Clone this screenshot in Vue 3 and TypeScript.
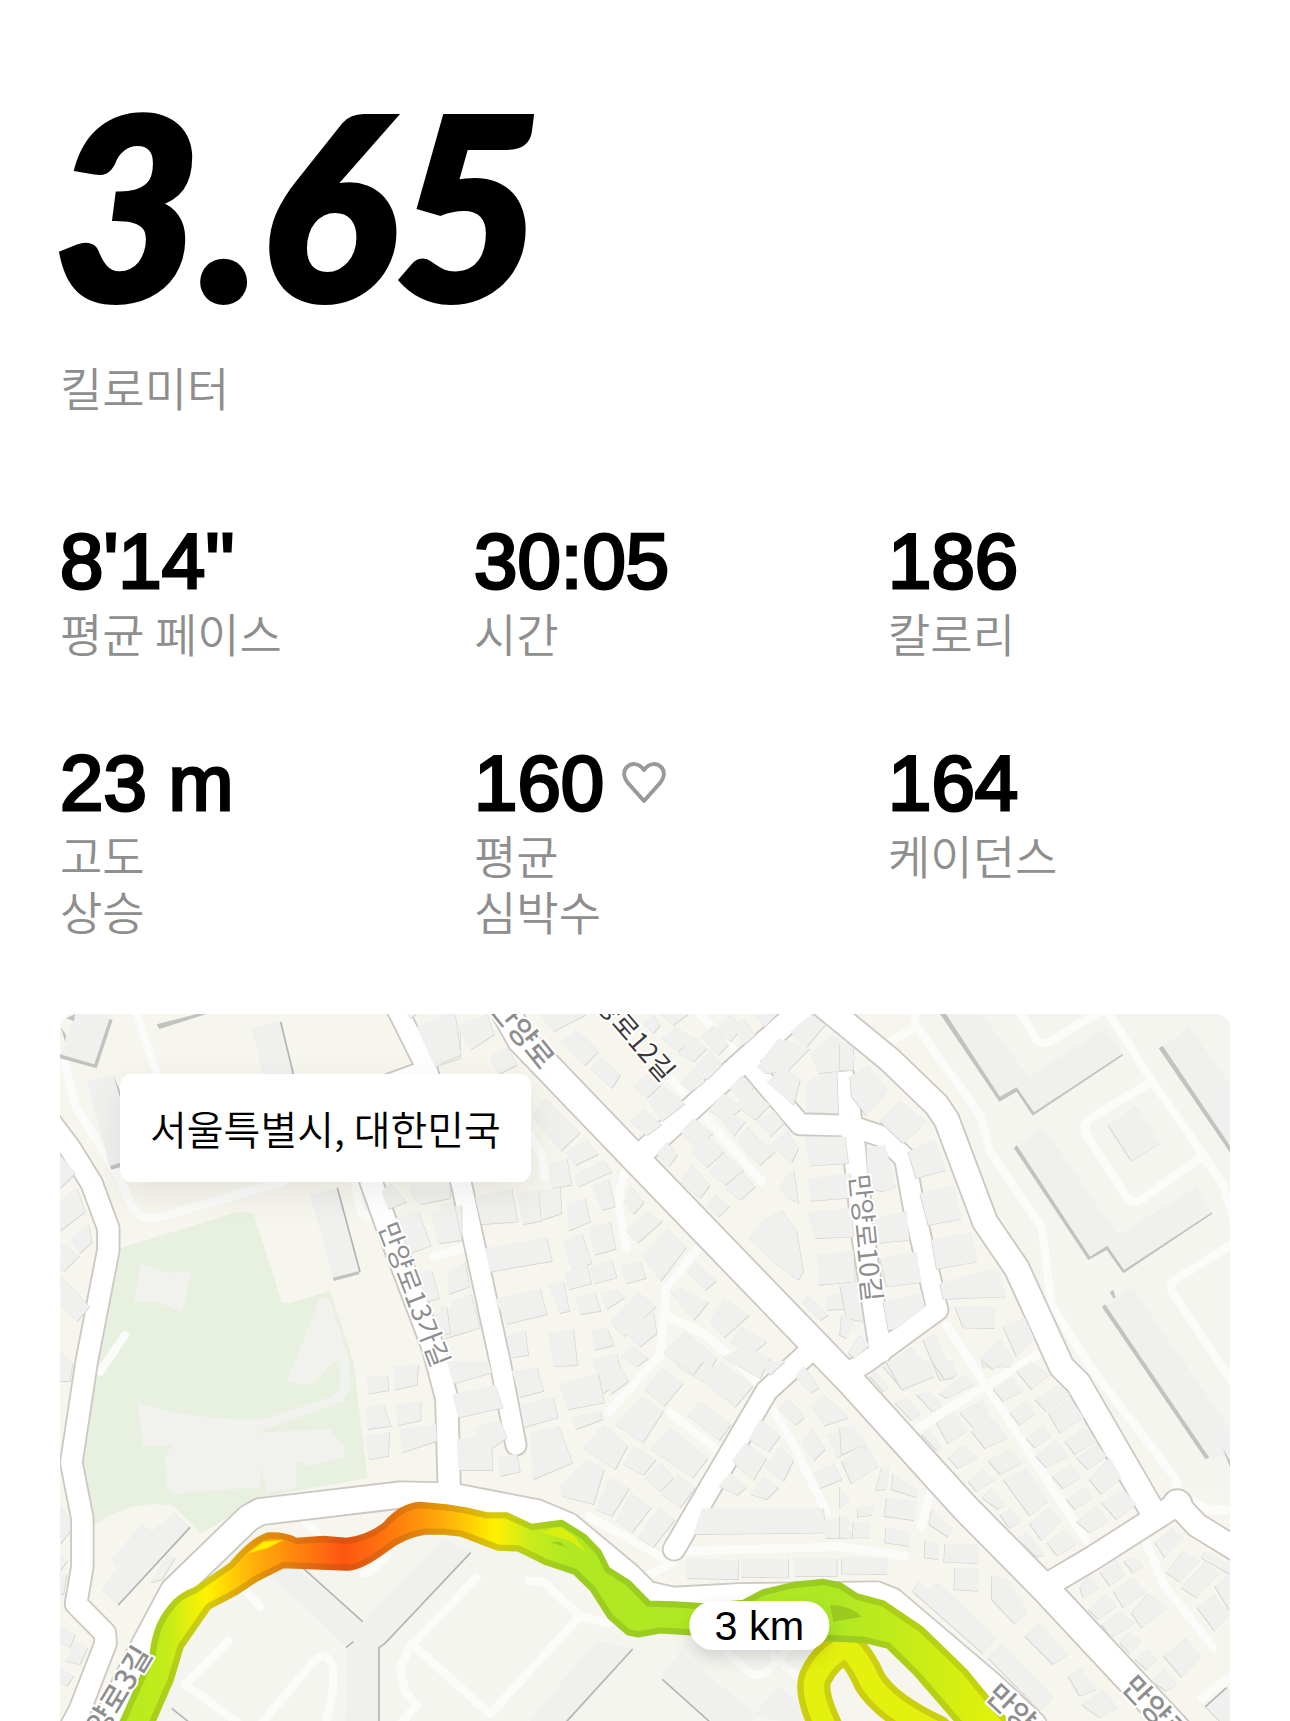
<script setup lang="ts">
interface Stat {
  value: string
  label: string[]
  heart?: boolean
}

interface Road {
  d: string
  w: number
}

interface Tile {
  x: number
  y: number
  dx: number
  shapes: string[]
}

const stats: Stat[] = [
  { value: "8'14''", label: ['평균 페이스'] },
  { value: '30:05', label: ['시간'] },
  { value: '186', label: ['칼로리'] },
  { value: '23 m', label: ['고도', '상승'] },
  { value: '160', label: ['평균', '심박수'], heart: true },
  { value: '164', label: ['케이던스'] },
]

const roads: Road[] = [
  { d: 'M1350,-10 L1415,105 L1770,475 L2410,1138 L2745,1508 L2990,1756 L3390,2185', w: 82 },
  { d: 'M0,350 L60,430 L125,535 L175,670 L175,735 L110,1070 L64,1373 L97,1540 L97,1686 L78,1796 L165,1885 L167,1915 L90,2113 L60,2170', w: 62 },
  { d: 'M1030,-10 L1130,190 L1235,540 L1350,1070 L1398,1320', w: 58 },
  { d: 'M1115,205 L960,262 L930,420 L965,535 L1010,660 L1150,1030 L1190,1180 L1198,1460', w: 64 },
  { d: 'M150,2190 L282,1923 L370,1758 L595,1540 L630,1520 L1050,1470 L1200,1473 L1460,1523 L1555,1563 L1735,1713 L1790,1768 L1870,1786 L2070,1775 L2480,1770 L2525,1788 L2825,2043 L2950,2160', w: 76 },
  { d: 'M1770,450 L2090,160 L2270,0', w: 66 },
  { d: 'M2270,-40 L2380,50 L2520,165 L2660,300 L2690,345 L2805,650 L2900,790 L3035,1085 L3085,1135 L3302,1510', w: 72 },
  { d: 'M3000,1735 L3130,1658 L3385,1495', w: 68 },
  { d: 'M3380,1495 L3440,1560 L3570,1640', w: 68 },
  { d: 'M2100,180 L2250,358 L2400,362 L2500,395 L2565,460 L2590,600 L2662,915 L2450,1070 L2400,1100', w: 60 },
  { d: 'M2375,200 L2395,300 L2410,400 L2440,700 L2492,1040', w: 64 },
  { d: 'M2300,1020 L2150,1158 L1872,1633', w: 62 },
]

const lanes: string[] = [
  'M1925,0 L2055,140', 'M1850,210 L1910,275', 'M1965,335 L2135,530',
  'M1725,495 L1708,560 L1708,620 L1730,730',
  'M1945,730 L1848,850 L1842,930 L1830,1050 L1675,1223',
  'M1845,930 L1960,985 L2060,1070 L2120,1130',
  'M1440,390 L1475,450 L1485,515', 'M1150,755 L1240,728',
  'M1860,1223 L2000,1333', 'M2170,1218 L2220,1298 L2330,1523',
  'M1615,1533 L1865,1673 L1790,1715', 'M1910,1638 L2370,1625 L2480,1640 L2565,1653',
  'M2640,1463 L2613,1565', 'M1435,1728 L1480,1730 L1590,1833 L1680,1855',
  'M1590,1833 L1320,2128 L1090,1920', 'M1280,1718 L1080,1925 L1050,1990 L1065,2060 L1100,2100 L1040,2170',
  'M765,1548 L840,1628', 'M940,1705 L960,1700 L1010,1650', 'M580,1748 L630,1805',
  'M535,1908 L405,2038 L560,2150', 'M640,2148 L790,1970 Q830,1930 850,1990 L850,2050 L830,2150',
  'M2030,1938 L2100,2005 Q2125,2020 2160,1990 L2230,1915', 'M2170,1950 L2240,2015',
  'M2690,960 L2805,1138 L3110,1608', 'M2605,1268 L2960,1050',
  'M3290,1613 L3340,1738 L3490,1928', 'M3455,2078 L3550,2010',
  'M2585,0 L2600,65 L2790,330 L2820,440 L2975,665 L3005,900 L3110,1070 L3375,1420 L3390,1470',
  'M2520,110 L2600,65', 'M3430,1490 L3480,1515 L3560,1515',
  'M2895,0 L2955,95 Q2970,125 3000,110 L3150,20', 'M3165,10 L3305,225 L3520,540 L3550,640',
  'M3305,230 L3120,340 Q3095,360 3110,390 L3225,570 Q3245,600 3275,583 L3450,460',
  'M3550,715 L3375,825 Q3355,840 3370,865 L3560,1150',
  'M250,0 L325,220', 'M40,150 L75,300 L210,520 L240,590 Q265,655 330,635 L700,530',
  'M910,500 L930,610 Q940,640 970,635', 'M225,990 L150,1100',
]

const tiles: Tile[] = [
  {
    x: 0, y: 0, dx: 1,
    shapes: [
      '605,70 690,50 730,215 640,215', '30,450 75,505 30,550', '80,548 105,620 30,678 30,585',
      '115,655 125,712 88,745 60,700', '35,715 88,752 42,798 30,790', '30,815 78,860 118,905 80,950 34,900',
      '1100,65 1185,32 1230,60 1230,160 1155,185', '1070,27 1100,27 1080,40',
      '1020,535 1070,590 1015,612 995,560', '1075,540 1200,540 1200,580 1115,597 1085,575',
      '1035,640 1105,618 1143,722 1080,745', '1140,625 1235,600 1235,705 1165,715',
      '1100,805 1145,795 1168,880 1130,890', '1200,800 1200,865 1235,850 1235,790', '30,1040 60,1070 60,1125 30,1130',
      '1150,930 1215,905 1235,985 1185,1000',
    ],
  },
  {
    x: 1170, y: 0, dx: 1,
    shapes: [
      '50,60 140,27 163,88 92,134', '0,27 45,27 62,150 0,176', '148,155 200,125 232,180 175,208',
      '300,27 440,27 340,80', '362,110 410,75 475,140 433,182', '450,190 480,155 540,210 515,250',
      '580,240 620,205 663,240 620,280', '625,285 670,245 735,295 665,350', '570,348 610,312 665,358 620,392',
      '275,330 315,280 420,383 362,438', '375,440 440,405 475,448 407,480', '400,510 490,465 515,500 415,545',
      '325,480 380,460 395,540 335,550', '455,540 505,522 525,605 485,615', '550,590 570,540 612,592 580,628',
      '105,575 215,550 232,650 125,658', '230,565 295,555 303,648 248,658', '300,555 360,548 365,625 305,645',
      '380,600 435,578 450,650 385,678', '558,678 615,620 667,648 595,712', '447,665 510,650 527,732 462,750',
      '368,710 425,685 455,775 395,792', '135,730 320,697 336,768 150,800', '605,750 680,672 738,728 662,828',
      '373,800 440,778 455,835 385,854', '450,785 515,765 530,818 462,836', '543,785 600,768 617,820 557,836',
      '0,600 40,590 65,705 0,715', '25,800 75,770 88,845 25,868', '165,882 300,850 320,928 200,957',
      '325,840 370,828 388,918 358,925', '405,880 465,862 482,918 420,928', '480,868 530,850 553,878 500,912',
      '510,952 595,862 648,905 550,995', '30,890 92,865 120,968 50,990', '0,905 20,905 30,985 0,990',
      '690,860 720,848 805,892 762,945', '740,800 765,768 828,828 795,856', '808,950 850,880 928,930 852,998',
      '870,1010 900,965 980,1010 935,1048', '550,980 640,920 650,985 600,1025', '670,1040 735,978 830,1060 790,1130 720,1090',
      '845,1055 920,1020 990,1060 960,1120', '200,990 255,975 265,1050 215,1058', '325,985 400,972 412,1080 340,1085',
      '455,975 500,965 522,1020 462,1035', '540,1055 575,1020 625,1060 590,1085', '455,1065 530,1045 550,1120 490,1165',
      '610,55 640,27 660,60 640,85', '660,27 745,27 700,60', '665,100 705,65 760,100 715,140',
      '715,145 760,95 800,130 760,170', '720,235 760,190 795,230 755,258', '765,180 810,140 845,180 800,225',
      '780,95 820,60 865,120 835,150', '825,75 870,27 905,70 870,110', '880,60 910,40 945,90 910,120', '940,27 1010,27 975,65',
      '1050,80 1115,27 1155,60 1100,125', '950,185 1015,100 1110,130 1040,200 975,205', '1110,145 1175,90 1240,130 1240,195 1135,205',
      '980,230 1030,185 1080,225 1060,300', '1098,240 1125,215 1190,200 1195,325 1098,322',
      '868,250 905,210 940,245 910,292', '805,315 850,265 905,310 855,350', '885,300 930,250 990,300 945,345',
      '850,355 880,330 915,350 880,395', '720,380 760,340 818,385 770,428', '890,400 920,365 960,410 925,450',
      '950,345 1000,315 1032,355 990,395', '650,445 680,410 712,450 685,485', '750,440 800,392 852,440 800,488',
      '805,500 850,445 910,495 855,540', '920,440 960,400 1005,440 960,480', '990,420 1040,375 1075,430 1055,472',
      '720,530 755,480 810,540 780,580', '855,550 905,500 945,545 900,585', '800,600 825,568 867,605 835,635',
      '1015,545 1060,490 1075,595 1045,580', '925,700 975,640 1025,615 1070,680 1090,800 1075,825 1010,780',
      '1093,395 1215,395 1225,475 1110,482', '1105,520 1230,505 1235,578 1110,588', '1100,620 1235,610 1240,695 1125,700',
      '1130,750 1240,735 1245,830 1135,840', '1155,872 1230,860 1245,910 1160,915', '1085,890 1100,870 1165,930 1140,945',
    ],
  },
  {
    x: 2370, y: 0, dx: -1,
    shapes: [
      '0,115 50,158 20,195 0,195', '30,215 85,180 145,255 80,332 35,275', '122,350 180,285 262,350 190,415',
      '80,430 135,418 170,545 130,560 85,550', '205,440 285,402 320,495 228,520', '240,565 345,540 365,642 265,660',
      '97,640 200,618 208,705 110,715', '275,705 395,680 412,770 290,792', '120,760 230,740 245,832 140,845',
      '300,835 470,790 500,875 310,882', '130,890 245,865 255,905 170,970 145,975', '345,905 465,905 465,970 370,968',
      '490,965 555,940 582,1000 530,1055', '425,1060 480,1000 520,1060 515,1085 430,1085', '0,840 50,830 70,950 20,940',
      '25,1045 60,990 90,1020 45,1060', '5,930 45,950 20,1000 0,990', '805,360 890,305 960,415 875,468',
      '250,1005 285,985 345,1120 300,1125', '130,1085 215,1025 285,1115 190,1155',
    ],
  },
  {
    x: 0, y: 1068, dx: 1,
    shapes: [
      '950,45 1012,42 1015,88 955,98', '1030,15 1105,10 1100,72 1032,86', '948,140 1000,130 1022,195 952,205',
      '1038,130 1112,120 1112,178 1042,194', '948,225 1018,212 1015,285 955,296', '1050,205 1158,190 1160,240 1055,275',
      '155,685 200,620 185,590 275,492 305,512 370,455 420,498 205,730', '300,665 350,580 375,590 335,655',
      '30,5 68,5 60,60 30,60', '30,795 75,820 60,860 30,845', '45,900 75,840 112,860 90,910',
      '30,920 70,945 50,975 30,965', '30,430 60,480 60,510 30,550', '30,580 52,600 30,630', '30,640 50,640 40,700 30,700',
    ],
  },
  {
    x: 1170, y: 1068, dx: 1,
    shapes: [
      '20,0 145,0 155,35 40,68', '215,30 290,18 310,90 240,108', '37,100 165,72 188,140 55,170',
      '240,128 340,108 353,170 252,198', '50,235 105,225 108,195 180,178 200,230 155,262 157,328 55,328',
      '172,288 230,278 240,332 180,345', '270,215 355,195 398,305 280,355', '357,70 475,38 492,125 385,145',
      '392,170 480,150 487,175 408,205', '485,30 530,0 565,60 512,100', '525,190 605,105 670,150 608,245',
      '612,85 665,20 728,68 672,135', '425,260 490,190 562,255 525,325', '548,310 580,255 648,295 610,342',
      '360,375 440,295 492,325 460,430 365,405', '632,265 690,198 803,292 758,350', '612,350 660,305 700,350 660,392',
      '663,400 710,340 765,380 720,440', '465,445 510,350 567,382 515,465', '528,478 570,395 633,440 575,515',
      '592,530 655,440 705,475 640,558', '740,160 780,122 873,190 838,238', '778,50 840,0 938,75 885,138',
      '705,0 790,0 760,40', '835,375 870,335 918,380 890,402', '875,300 915,245 980,290 940,358',
      '925,235 960,175 1020,225 985,272', '975,315 1020,258 1060,298 1030,360', '928,400 970,345 1015,380 980,415',
      '1015,145 1045,112 1092,170 1065,192', '1080,245 1115,205 1155,265 1122,298', '1113,130 1150,100 1225,170 1150,195',
      '1118,335 1180,308 1205,355 1140,382', '1160,220 1220,200 1250,260 1190,290', '1150,480 1200,470 1240,530 1155,532',
      '785,442 1150,442 1155,515 760,520', '740,590 895,598 893,655 740,652', '903,592 1045,592 1045,650 903,648',
      '1062,590 1190,592 1190,645 1062,645', '1065,45 1090,15 1138,80 1110,95', '955,0 1035,0 990,42',
    ],
  },
  {
    x: 2370, y: 1068, dx: -1,
    shapes: [
      '90,45 110,30 148,80 130,92', '138,0 270,0 285,45 185,85', '275,0 340,0 352,42 315,55',
      '165,125 200,110 243,155 215,178', '230,100 265,88 308,130 278,152', '298,98 375,40 405,70 320,112',
      '360,155 430,115 450,165 400,200', '290,185 345,150 382,210 325,248', '395,210 455,170 505,230 435,262',
      '245,220 265,205 305,255 290,268', '325,290 370,252 415,290 355,322', '445,298 510,262 550,305 480,340',
      '385,360 430,325 465,355 410,392', '427,410 455,382 495,430 475,445', '490,355 560,322 625,420 570,465',
      '480,460 515,440 545,480 510,502', '570,488 630,440 665,478 605,538', '535,535 560,510 615,582 590,588',
      '622,545 675,505 710,550 652,585', '460,85 520,48 550,90 490,120', '530,30 575,0 630,40 575,85',
      '585,115 655,72 690,100 620,152', '510,155 560,118 585,160 540,192', '625,155 690,112 732,170 660,215',
      '560,232 610,190 635,225 585,260', '588,285 650,235 685,285 620,320', '675,240 735,200 770,240 705,280',
      '710,290 770,250 800,285 745,325', '637,345 695,310 725,350 670,382', '748,355 810,290 845,350 785,400',
      '680,415 735,378 760,410 705,445', '785,425 850,385 890,430 830,475', '710,482 770,435 805,482 750,515',
      '0,200 40,190 80,250 5,280', '5,300 80,250 118,315 35,368', '0,375 30,420 0,440', '125,320 150,318 140,385 108,388',
      '160,335 235,390 232,410 155,385', '140,410 228,420 222,478 133,465', '55,440 102,432 98,462 52,468',
      '0,462 30,470 20,530 0,530', '40,480 88,482 92,530 38,530', '138,498 212,512 208,555 135,545',
      '275,445 340,505 325,528 268,490', '255,538 298,545 295,595 255,590', '315,548 418,550 415,608 312,602',
      '345,620 418,622 415,690 343,685', '5,588 142,590 142,640 5,638', '455,645 500,650 565,750 525,788 455,715',
      '218,690 235,662 270,685 295,665 470,828 430,878', '555,825 600,785 685,880 640,910',
      '445,890 490,848 642,1010 600,1050', '685,945 725,922 770,985 720,1005', '725,1030 790,985 835,1040 780,1070',
      '720,680 745,645 780,680 730,710', '780,632 830,595 855,640 810,675', '852,600 885,585 910,615 880,635',
      '820,690 880,650 920,690 850,740', '745,745 800,700 832,735 775,775', '785,790 840,750 888,785 815,828',
      '875,755 925,695 983,740 905,800', '840,845 870,812 905,840 870,878', '885,895 925,862 952,895 920,925',
      '972,885 1040,830 1085,885 1025,948', '935,960 975,920 1012,970 980,990', '945,545 1000,500 1030,530 975,590',
      '980,635 1030,568 1080,600 1020,662', '1025,680 1100,598 1135,640 1070,710', '1095,570 1170,610 1170,640 1085,590',
      '1072,740 1125,700 1170,760 1125,810', '1125,675 1170,640 1170,750', '1095,1035 1160,980 1170,985 1170,1080 1140,1080',
      '430,0 500,0 460,25',
    ],
  },
]

const largeBlocks: string[] = [
  '75,27 165,27 185,50 138,185 32,150', '110,230 190,210 215,300 215,475 180,490', '780,570 860,548 928,800 850,820',
  '2675,27 2795,27 2938,215 3165,70 3218,148 2950,325 2900,252 2850,285',
  '2895,425 2978,365 3205,690 3440,545 3485,625 3220,800 3172,725 3118,760',
  '3335,128 3415,65 3545,240 3545,430', '3160,905 3245,845 3560,1300 3560,1350 3470,1360',
  '640,1690 740,1690 940,1850 1185,1600 1260,1640 990,1925 988,2180 885,2180 890,1925',
  '1430,2160 1640,1905 1748,1932 1550,2160', '1835,2015 1890,1940 2120,2130 2090,2170 2010,2170',
  '2110,2130 2185,2045 2300,2140 2290,2170',
]

const deepShades: string[] = [
  '188,45 140,190 30,160 30,148 133,178 178,42', '48,40 75,27 72,48', '32,65 48,90 46,112', '320,58 440,27 470,27 328,72',
  '190,210 212,285 212,262', '180,483 215,472 215,485 185,494', '848,818 928,798 928,808 852,828',
  '2670,27 2688,27 2850,275 2900,247 2952,322 3218,146 3218,152 2948,332 2900,260 2848,290 ',
  '2900,420 3120,755 3172,722 3222,795 3486,622 3486,627 3220,805 3170,735 3115,765 2892,430',
  '3338,122 3545,430 3545,450 3326,130', '3165,898 3478,1358 3466,1362 3156,906', '3190,855 3197,878 3190,880 3179,862',
  '3518,1330 3560,1400 3545,1400',
]

const shadeLines: string[] = [
  'M692,50 L732,215', 'M862,548 L930,800', 'M420,1567 L205,1800', 'M760,1690 L938,1850',
  'M1262,1643 L1005,1915 L987,1928 L987,2160', 'M888,1928 L910,1910', 'M1748,1932 L1540,2160', 'M1837,2023 L1990,2160',
  'M365,2110 L415,2150', 'M3466,2105 L3530,2048',
]
</script>

<template>
  <main class="run">
    <header class="distance">
      <h1 class="distance-value">3.65</h1>
      <p class="label">킬로미터</p>
    </header>

    <dl class="stats">
      <div v-for="s in stats" :key="s.label.join('')" class="stat">
        <dd class="stat-value">
          {{ s.value }}
          <svg v-if="s.heart" class="heart" viewBox="0 0 44 42" aria-hidden="true">
            <path d="M22 39 L6 21 C2 16 1 10 4 6 C9 0 17 1 22 8 C27 1 35 0 40 6 C43 10 42 16 38 21 Z" />
          </svg>
        </dd>
        <dt class="label"><span v-for="l in s.label" :key="l">{{ l }}</span></dt>
      </div>
    </dl>

    <section class="map" aria-label="경로 지도">
      <p class="place">서울특별시, 대한민국</p>
      <svg class="canvas" viewBox="30 27 3510 2121">
        <defs>
          <linearGradient id="pace" gradientUnits="userSpaceOnUse" x1="200" y1="0" x2="2900" y2="0">
            <stop offset="0" stop-color="#b4ea22" />
            <stop offset=".055" stop-color="#c2ec1a" />
            <stop offset=".1" stop-color="#fff200" />
            <stop offset=".15" stop-color="#ffb20a" />
            <stop offset=".2" stop-color="#ff850e" />
            <stop offset=".252" stop-color="#ff5512" />
            <stop offset=".31" stop-color="#ff7d0e" />
            <stop offset=".37" stop-color="#ffb40a" />
            <stop offset=".42" stop-color="#fff000" />
            <stop offset=".46" stop-color="#c8ec1c" />
            <stop offset=".5" stop-color="#b0e922" />
            <stop offset=".8" stop-color="#aee824" />
            <stop offset=".88" stop-color="#c6ec18" />
            <stop offset="1" stop-color="#e8f208" />
          </linearGradient>
          <linearGradient id="edge" gradientUnits="userSpaceOnUse" x1="200" y1="0" x2="2900" y2="0">
            <stop offset="0" stop-color="#a2d01e" />
            <stop offset=".055" stop-color="#accf1a" />
            <stop offset=".1" stop-color="#d2cc0c" />
            <stop offset=".15" stop-color="#e0980c" />
            <stop offset=".2" stop-color="#e0760f" />
            <stop offset=".252" stop-color="#de5012" />
            <stop offset=".31" stop-color="#e0700e" />
            <stop offset=".37" stop-color="#e09e08" />
            <stop offset=".42" stop-color="#d8c80a" />
            <stop offset=".46" stop-color="#b2cf18" />
            <stop offset=".5" stop-color="#9ccd20" />
            <stop offset=".8" stop-color="#9acb22" />
            <stop offset=".88" stop-color="#b0cf16" />
            <stop offset="1" stop-color="#ced60a" />
          </linearGradient>
          <filter id="pill-shadow" x="-30%" y="-60%" width="160%" height="260%">
            <feDropShadow dx="0" dy="24" stdDeviation="26" flood-color="#000" flood-opacity=".14" />
          </filter>
        </defs>

        <rect class="ground" x="0" y="0" width="3600" height="2200" />
        <path class="district" d="M2560,0 L3600,0 L3600,1480 L3380,1450 L3080,1100 L2950,800 L2760,480 L2740,300 Z" />
        <path class="district" d="M640,1600 L1200,1560 L1450,1640 L1640,1850 L2300,1880 L2300,2180 L280,2180 L480,1820 Z" />
        <path
          class="park"
          d="M175,740 L560,622 Q600,615 612,630 L695,890 L715,895 L840,858 L910,1068 L953,1420 L640,1475 L455,1585 L370,1503 Q240,1480 130,1565 L97,1540 L64,1373 Z"
        />
        <g class="clearing">
          <path d="M275,775 L350,805 L425,797 L397,922 L330,895 L250,888 Z" />
          <path d="M810,875 L840,885 L895,1050 L900,1150 L880,1188 L620,1283 L840,1273 L885,1328 L880,1358 L780,1383 L740,1368 L740,1448 L650,1463 L632,1378 L632,1446 L370,1466 L350,1438 L345,1358 L365,1320 L280,1323 L262,1193 L370,1225 L540,1243 L640,1243 L850,1173 L870,1148 L870,1068 L840,1078 L790,1138 L740,1136 L710,1128 L740,1058 Z" />
        </g>

        <g class="lanes">
          <path v-for="d in lanes" :key="d" :d="d" />
        </g>
        <g class="casing">
          <path v-for="r in roads" :key="r.d" :d="r.d" :stroke-width="r.w + 11" />
          <circle cx="3382" cy="1498" r="48" />
        </g>
        <g class="surface">
          <path v-for="r in roads" :key="r.d" :d="r.d" :stroke-width="r.w" />
          <circle cx="3382" cy="1498" r="42" />
        </g>

        <g v-for="t in tiles" :key="`${t.x}-${t.y}`" :transform="`translate(${t.x} ${t.y})`">
          <g class="shade" :transform="`translate(${t.dx * 2} 2)`">
            <polygon v-for="p in t.shapes" :key="p" :points="p" />
          </g>
          <g class="block">
            <polygon v-for="p in t.shapes" :key="p" :points="p" />
          </g>
        </g>
        <g class="block">
          <polygon v-for="p in largeBlocks" :key="p" :points="p" />
        </g>
        <g class="deep">
          <polygon v-for="p in deepShades" :key="p" :points="p" />
          <path v-for="d in shadeLines" :key="d" :d="d" />
        </g>

        <g class="loop">
          <path class="loop-edge" d="M2345,2200 Q2270,2060 2300,2010 Q2330,1950 2390,1925 Q2430,1960 2460,2030 Q2510,2110 2660,2180" />
          <path class="loop-fill" d="M2345,2200 Q2270,2060 2300,2010 Q2330,1950 2390,1925 Q2430,1960 2460,2030 Q2510,2110 2660,2180" />
        </g>
        <path
          class="route"
          d="M200,2190 L308,1950 Q316,1860 365,1805 Q390,1772 435,1756 L545,1680 Q605,1608 652,1592 Q700,1588 740,1608 L820,1602 L890,1608 Q960,1598 1006,1560 Q1055,1503 1110,1500 L1190,1507 L1250,1517 L1310,1531 L1370,1531 L1445,1566 L1535,1554 L1600,1594 L1645,1640 L1672,1694 L1735,1734 L1796,1796 L1870,1798 L1970,1804 L2080,1794 L2140,1762 L2230,1740 L2320,1731 L2370,1741 L2420,1774 L2500,1796 L2615,1874 L2745,2000 L2900,2190 L2760,2190 L2595,2000 L2515,1922 L2445,1905 L2390,1902 L2270,1896 L2020,1888 L1830,1876 L1765,1888 L1735,1882 L1680,1834 L1628,1752 L1575,1700 L1485,1670 L1405,1630 L1345,1628 L1235,1586 L1180,1580 L1125,1580 Q1060,1590 1010,1630 Q930,1690 890,1688 L700,1680 L620,1720 L560,1760 L475,1805 L392,1925 L362,2025 L290,2190 Z"
        />
        <path class="glint" d="M595,1645 L640,1610 L700,1604 L655,1628 Z" />
        <path class="glint-soft" d="M1470,1580 L1530,1566 L1570,1590 L1608,1642 L1560,1608 Z" />
        <path class="streak" d="M1500,1612 L1530,1610 L1548,1626 Z M2340,1800 Q2400,1800 2435,1835 L2350,1850 Z" />

        <g class="road-names">
          <text class="major" text-anchor="middle" transform="translate(1424 80) rotate(51)">만양로</text>
          <text class="dark" text-anchor="end" transform="translate(1862 212) rotate(49)">만양로12길</text>
          <text text-anchor="middle" transform="translate(1098 866) rotate(69)">만양로13가길</text>
          <text text-anchor="middle" transform="translate(2453 698) rotate(84)">만양로10길</text>
          <text class="major" text-anchor="end" transform="translate(276 1928) rotate(-59)">만양로3길</text>
          <text class="major" transform="translate(2829 2048) rotate(43)">만양로</text>
          <text class="major" transform="translate(3240 2022) rotate(47)">만양로</text>
        </g>

        <g class="marker">
          <rect x="1918" y="1788" width="420" height="147" rx="74" filter="url(#pill-shadow)" />
          <text x="2128" y="1906" text-anchor="middle">3 km</text>
        </g>
      </svg>
    </section>
  </main>
</template>

<style>
body {
  margin: 0;
  background: #fff;
}
</style>

<style scoped>
.run {
  padding: 80px 60px 0;
  font-family: "Liberation Sans", "Noto Sans CJK KR", sans-serif;
  color: #000;
}

.distance-value {
  margin: 0 0 0 -6px;
  font-family: Lato, sans-serif;
  font-size: 252px;
  font-style: italic;
  font-weight: 900;
  line-height: 246px;
  -webkit-text-stroke: 6px #000;
}

.label {
  margin: 0;
  font-family: "Noto Sans CJK KR", sans-serif;
  font-size: 46px;
  font-weight: 350;
  line-height: 56px;
  color: #8e8e8e;
}

.distance .label {
  margin-top: 32px;
}

.label span {
  display: block;
}

.stats {
  display: grid;
  grid-template-columns: repeat(3, 1fr);
  gap: 80px 72px;
  margin: 104px 0 76px;
}

.stat {
  display: flex;
  flex-direction: column;
}

.stat-value {
  display: flex;
  align-items: center;
  gap: 18px;
  margin: 0;
  font-size: 78px;
  font-weight: 400;
  line-height: 86px;
  white-space: nowrap;
  -webkit-text-stroke: 3px #000;
}

.heart {
  width: 44px;
  height: 42px;
  fill: none;
  stroke: #999;
  stroke-width: 4;
  stroke-linejoin: round;
}

.map {
  position: relative;
  overflow: hidden;
  border-radius: 14px 14px 0 0;
}

.canvas {
  display: block;
  width: 100%;
  height: auto;
}

.place {
  position: absolute;
  top: 60px;
  left: 60px;
  margin: 0;
  padding: 24px 30px;
  border-radius: 12px;
  background: #fff;
  box-shadow: 0 12px 36px rgba(0, 0, 0, .08);
  font-family: "Noto Sans CJK KR", sans-serif;
  font-size: 40px;
  font-weight: 350;
  line-height: 60px;
}

.ground {
  fill: #f7f6ee;
}

.district {
  fill: #f5f5f0;
}

.park {
  fill: #e8f0df;
}

.clearing {
  fill: #f1f2ed;
}

.lanes,
.casing,
.surface,
.loop {
  fill: none;
  stroke-linecap: round;
  stroke-linejoin: round;
}

.lanes {
  stroke: #fbfbfa;
  stroke-width: 25;
}

.casing {
  stroke: #cdc8c2;
}

.casing circle {
  fill: #cdc8c2;
  stroke: none;
}

.surface {
  stroke: #fff;
}

.surface circle {
  fill: #fff;
  stroke: none;
}

.shade {
  fill: #d2d2ce;
}

.block {
  fill: #f0f0ee;
}

.deep {
  fill: #c2c2c0;
}

.deep path {
  fill: none;
  stroke: #b4b4b2;
  stroke-width: 5;
}

.loop-edge {
  stroke: #cccf10;
  stroke-width: 100;
}

.loop-fill {
  stroke: #e4f00e;
  stroke-width: 62;
}

.route {
  fill: url(#pace);
  stroke: url(#edge);
  stroke-width: 19;
  stroke-linejoin: round;
}

.glint {
  fill: #fff000;
}

.glint-soft {
  fill: #daef10;
}

.streak {
  fill: #9ccb20;
}

.road-names text {
  font-family: "Noto Sans CJK KR", sans-serif;
  font-size: 80px;
  fill: #8e8e8e;
  stroke: #fff;
  stroke-width: 12;
  stroke-linejoin: round;
  paint-order: stroke;
  dominant-baseline: central;
}

.road-names .major {
  font-size: 88px;
  font-weight: 500;
}

.road-names .dark {
  fill: #3a3a3a;
}

.marker rect {
  fill: #fff;
}

.marker text {
  font-family: "Liberation Sans", sans-serif;
  font-size: 124px;
}
</style>
